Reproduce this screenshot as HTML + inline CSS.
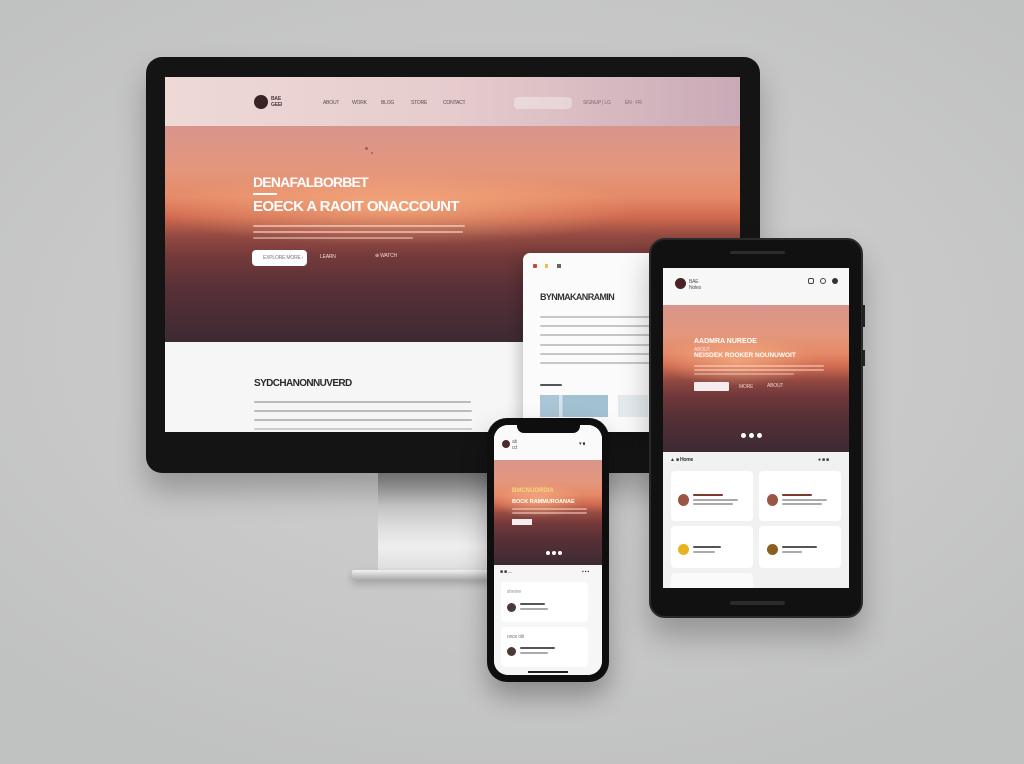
<!DOCTYPE html>
<html><head><meta charset="utf-8"><style>
*{margin:0;padding:0;box-sizing:border-box}
body{width:1024px;height:764px;overflow:hidden;position:relative;font-family:"Liberation Sans",sans-serif;
background:radial-gradient(ellipse 70% 60% at 50% 45%,#d2d2d2 0%,#c8c8c8 60%,#c0c1c1 100%);}
.a{position:absolute}
.t{position:absolute;font-size:5px;line-height:6px;color:#888;white-space:nowrap;overflow:hidden;letter-spacing:-.2px}
.bar{position:absolute;height:2px;border-radius:1px}
.sea{background:
 radial-gradient(ellipse 60% 25% at 40% 38%,rgba(255,190,140,.6),rgba(255,160,120,0) 70%),
 linear-gradient(180deg,#d8958c 0%,#e3977c 20%,#e58a68 33%,#d06a50 42%,#934a42 51%,#72393a 61%,#583037 75%,#3d2a33 100%);}
.shadow{box-shadow:0 18px 30px rgba(0,0,0,.25)}
</style></head><body>

<!-- monitor stand -->
<div class="a" style="left:378px;top:470px;width:112px;height:102px;background:linear-gradient(180deg,#8a8a8a 0%,#c8c8c8 35%,#efefef 75%,#dcdcdc 100%);"></div>
<div class="a" style="left:352px;top:570px;width:140px;height:10px;background:linear-gradient(180deg,#f2f2f2,#a9a9a9);border-radius:2px;box-shadow:0 4px 8px rgba(0,0,0,.2)"></div>

<!-- monitor -->
<div class="a shadow" style="left:146px;top:57px;width:614px;height:416px;background:#141414;border-radius:16px;"></div>
<div class="a" style="left:165px;top:77px;width:575px;height:355px;overflow:hidden;background:#f6f6f6">
  <div class="a" style="left:0;top:0;width:575px;height:49px;background:linear-gradient(90deg,#eed9d7,#e6cccd 50%,#c9aab6)"></div>
  <div class="a" style="left:89px;top:18px;width:14px;height:14px;border-radius:50%;background:#3a2226"></div>
  <div class="t" style="left:106px;top:19px;color:#4a3a3a;font-weight:bold">BAE<br>GEEI</div>
  <div class="t" style="left:158px;top:23px;color:#5a4a4a">ABOUT</div>
  <div class="t" style="left:187px;top:23px;color:#5a4a4a">WORK</div>
  <div class="t" style="left:216px;top:23px;color:#5a4a4a">BLOG</div>
  <div class="t" style="left:246px;top:23px;color:#5a4a4a">STORE</div>
  <div class="t" style="left:278px;top:23px;color:#5a4a4a">CONTACT</div>
  <div class="a" style="left:349px;top:20px;width:58px;height:12px;border-radius:4px;background:rgba(255,255,255,.35)"></div>
  <div class="t" style="left:418px;top:23px;color:#7a6a70">SIGNUP | LG</div>
  <div class="t" style="left:460px;top:23px;color:#7a6a70">EN · FR</div>
  <div class="a sea" style="left:0;top:49px;width:575px;height:216px"></div>
  <div class="a" style="left:200px;top:70px;width:3px;height:3px;border-radius:50%;background:#b05a50"></div>
  <div class="a" style="left:206px;top:75px;width:2px;height:2px;border-radius:50%;background:#b05a50"></div>
  <div class="a" style="left:88px;top:97px;font-size:14px;font-weight:bold;color:#fff;letter-spacing:-.8px;white-space:nowrap">DENAFALBORBET</div>
  <div class="a" style="left:88px;top:116px;width:24px;height:2px;background:#fff"></div>
  <div class="a" style="left:88px;top:121px;font-size:15px;font-weight:bold;color:#fff;letter-spacing:-.6px;white-space:nowrap">EOECK A RAOIT ONACCOUNT</div>
  <div class="bar" style="left:88px;top:148px;width:212px;background:rgba(255,230,220,.55)"></div>
  <div class="bar" style="left:88px;top:154px;width:210px;background:rgba(255,230,220,.55)"></div>
  <div class="bar" style="left:88px;top:160px;width:160px;background:rgba(255,230,220,.45)"></div>
  <div class="a" style="left:87px;top:173px;width:55px;height:16px;border-radius:4px;background:#fff"></div>
  <div class="t" style="left:98px;top:178px;color:#777">EXPLORE MORE ›</div>
  <div class="t" style="left:155px;top:177px;color:#f0d8d0">LEARN</div>
  <div class="t" style="left:210px;top:176px;color:#f0d8d0">⊕ WATCH</div>
  <div class="a" style="left:89px;top:301px;font-size:10px;font-weight:bold;color:#2a2a2a;white-space:nowrap;letter-spacing:-.6px">SYDCHANONNUVERD</div>
  <div class="bar" style="left:89px;top:324px;width:217px;background:#bbb"></div>
  <div class="bar" style="left:89px;top:333px;width:218px;background:#bbb"></div>
  <div class="bar" style="left:89px;top:342px;width:218px;background:#bbb"></div>
  <div class="bar" style="left:89px;top:351px;width:218px;background:#ccc"></div>
</div>

<!-- floating card -->
<div class="a" style="left:523px;top:253px;width:130px;height:179px;background:#fbfbfb;border-radius:7px 0 0 0;box-shadow:-4px 4px 14px rgba(0,0,0,.2)"></div>
<div class="a" style="left:533px;top:264px;width:4px;height:4px;background:#c43;border-radius:1px"></div>
<div class="a" style="left:545px;top:264px;width:3px;height:4px;background:#e9c04a"></div>
<div class="a" style="left:557px;top:264px;width:4px;height:4px;background:#666"></div>
<div class="a" style="left:540px;top:292px;font-size:9px;font-weight:bold;color:#333;white-space:nowrap;letter-spacing:-.6px">BYNMAKANRAMIN</div>
<div class="bar" style="left:540px;top:316px;width:110px;background:#c6c6c6"></div>
<div class="bar" style="left:540px;top:325px;width:110px;background:#c6c6c6"></div>
<div class="bar" style="left:540px;top:334px;width:110px;background:#c6c6c6"></div>
<div class="bar" style="left:540px;top:344px;width:110px;background:#c6c6c6"></div>
<div class="bar" style="left:540px;top:353px;width:110px;background:#c6c6c6"></div>
<div class="bar" style="left:540px;top:362px;width:110px;background:#c6c6c6"></div>
<div class="bar" style="left:540px;top:384px;width:22px;background:#555"></div>
<div class="a" style="left:540px;top:395px;width:68px;height:22px;background:linear-gradient(90deg,#a9c6d6 0 28%,#d5e3ea 28% 33%,#a2c2d2 33%)"></div>
<div class="a" style="left:618px;top:395px;width:30px;height:22px;background:#e4ebef"></div>

<!-- tablet -->
<div class="a shadow" style="left:649px;top:238px;width:214px;height:380px;background:#111;border-radius:16px;border:2px solid #2a2a2a"></div>
<div class="a" style="left:862px;top:305px;width:3px;height:22px;background:#222"></div>
<div class="a" style="left:862px;top:350px;width:3px;height:16px;background:#222"></div>
<div class="a" style="left:730px;top:251px;width:55px;height:3px;border-radius:2px;background:#2c2c2c"></div>
<div class="a" style="left:730px;top:601px;width:55px;height:4px;border-radius:2px;background:#2c2c2c"></div>
<div class="a" style="left:663px;top:268px;width:186px;height:320px;overflow:hidden;background:#f1f1f1">
  <div class="a" style="left:0;top:0;width:186px;height:37px;background:#f7f7f7"></div>
  <div class="a" style="left:12px;top:10px;width:11px;height:11px;border-radius:50%;background:#4a2226"></div>
  <div class="t" style="left:26px;top:11px;color:#555">BAE<br>Notes</div>
  <div class="a" style="left:145px;top:10px;width:6px;height:6px;border:1.5px solid #444;border-radius:2px"></div>
  <div class="a" style="left:157px;top:10px;width:6px;height:6px;border:1.5px solid #444;border-radius:50%"></div>
  <div class="a" style="left:169px;top:10px;width:6px;height:6px;background:#333;border-radius:50%"></div>
  <div class="a sea" style="left:0;top:37px;width:186px;height:147px"></div>
  <div class="a" style="left:31px;top:70px;font-size:7px;font-weight:bold;color:#fff;white-space:nowrap">AADMRA NUREOE</div>
  <div class="t" style="left:31px;top:79px;color:#fde">ABOUT</div>
  <div class="a" style="left:31px;top:84px;font-size:6.5px;font-weight:bold;color:#fff;white-space:nowrap">NEISDEK ROOKER NOUNUWOIT</div>
  <div class="bar" style="left:31px;top:97px;width:130px;height:1.5px;background:rgba(255,220,210,.5)"></div>
  <div class="bar" style="left:31px;top:101px;width:130px;height:1.5px;background:rgba(255,220,210,.5)"></div>
  <div class="bar" style="left:31px;top:105px;width:100px;height:1.5px;background:rgba(255,220,210,.4)"></div>
  <div class="a" style="left:31px;top:114px;width:35px;height:9px;background:#f6eeee;border-radius:1px"></div>
  <div class="t" style="left:76px;top:116px;color:#f0d0c8">MORE</div>
  <div class="t" style="left:104px;top:115px;color:#f0d0c8">ABOUT</div>
  <div class="a" style="left:78px;top:165px;width:5px;height:5px;border-radius:50%;background:#fff"></div>
  <div class="a" style="left:86px;top:165px;width:5px;height:5px;border-radius:50%;background:#fff"></div>
  <div class="a" style="left:94px;top:165px;width:5px;height:5px;border-radius:50%;background:#fff"></div>
  <div class="t" style="left:7px;top:189px;color:#333;font-weight:bold">▲ ■ Home</div>
  <div class="t" style="left:155px;top:189px;color:#333">● ■ ■</div>
  <div class="a" style="left:8px;top:203px;width:82px;height:50px;background:#fff;border-radius:4px"></div>
  <div class="a" style="left:96px;top:203px;width:82px;height:50px;background:#fff;border-radius:4px"></div>
  <div class="a" style="left:15px;top:226px;width:11px;height:12px;border-radius:50%;background:#9a5545"></div>
  <div class="a" style="left:104px;top:226px;width:11px;height:12px;border-radius:50%;background:#9a5545"></div>
  <div class="bar" style="left:30px;top:226px;width:30px;background:#7a3a30"></div>
  <div class="bar" style="left:30px;top:231px;width:45px;height:1.5px;background:#aaa"></div>
  <div class="bar" style="left:30px;top:235px;width:40px;height:1.5px;background:#aaa"></div>
  <div class="bar" style="left:119px;top:226px;width:30px;background:#7a3a30"></div>
  <div class="bar" style="left:119px;top:231px;width:45px;height:1.5px;background:#aaa"></div>
  <div class="bar" style="left:119px;top:235px;width:40px;height:1.5px;background:#aaa"></div>
  <div class="a" style="left:8px;top:258px;width:82px;height:42px;background:#fff;border-radius:4px"></div>
  <div class="a" style="left:96px;top:258px;width:82px;height:42px;background:#fff;border-radius:4px"></div>
  <div class="a" style="left:15px;top:276px;width:11px;height:11px;border-radius:50%;background:#e7b321"></div>
  <div class="a" style="left:104px;top:276px;width:11px;height:11px;border-radius:50%;background:#8a6020"></div>
  <div class="bar" style="left:30px;top:278px;width:28px;background:#555"></div>
  <div class="bar" style="left:30px;top:283px;width:22px;height:1.5px;background:#aaa"></div>
  <div class="bar" style="left:119px;top:278px;width:35px;background:#555"></div>
  <div class="bar" style="left:119px;top:283px;width:20px;height:1.5px;background:#aaa"></div>
  <div class="a" style="left:8px;top:305px;width:82px;height:20px;background:#fafafa;border-radius:4px"></div>
</div>

<!-- phone -->
<div class="a" style="left:487px;top:418px;width:122px;height:264px;background:#0e0e0e;border-radius:20px;box-shadow:0 14px 26px rgba(0,0,0,.3)"></div>
<div class="a" style="left:494px;top:425px;width:108px;height:250px;overflow:hidden;background:#f4f4f4;border-radius:14px">
  <div class="a" style="left:0;top:0;width:108px;height:35px;background:#fafafa"></div>
  <div class="a" style="left:23px;top:-1px;width:63px;height:9px;background:#0e0e0e;border-radius:0 0 7px 7px"></div>
  <div class="a" style="left:8px;top:15px;width:8px;height:8px;border-radius:50%;background:#4a2a2e"></div>
  <div class="t" style="left:18px;top:14px;color:#666">ab<br>cd</div>
  <div class="t" style="left:85px;top:16px;color:#333">▾ ■</div>
  <div class="a sea" style="left:0;top:35px;width:108px;height:105px"></div>
  <div class="a" style="left:18px;top:63px;font-size:6px;font-weight:bold;color:#f6d77a;white-space:nowrap">BMCNUORDIA</div>
  <div class="a" style="left:18px;top:74px;font-size:5.5px;font-weight:bold;color:#fff;white-space:nowrap">BOCK RAMMUROANAE</div>
  <div class="bar" style="left:18px;top:83px;width:75px;height:1.5px;background:rgba(255,220,210,.5)"></div>
  <div class="bar" style="left:18px;top:87px;width:75px;height:1.5px;background:rgba(255,220,210,.5)"></div>
  <div class="a" style="left:18px;top:94px;width:20px;height:6px;background:#f4eeee"></div>
  <div class="a" style="left:52px;top:126px;width:4px;height:4px;border-radius:50%;background:#fff"></div>
  <div class="a" style="left:58px;top:126px;width:4px;height:4px;border-radius:50%;background:#fff"></div>
  <div class="a" style="left:64px;top:126px;width:4px;height:4px;border-radius:50%;background:#fff"></div>
  <div class="a" style="left:0;top:140px;width:108px;height:110px;background:#f6f6f6"></div>
  <div class="t" style="left:6px;top:144px;color:#333">■ ■ ...</div>
  <div class="t" style="left:88px;top:144px;color:#333">▪ ▪ ▪</div>
  <div class="a" style="left:7px;top:157px;width:87px;height:40px;background:#fff;border-radius:4px"></div>
  <div class="a" style="left:7px;top:202px;width:87px;height:40px;background:#fff;border-radius:4px"></div>
  <div class="t" style="left:13px;top:164px;color:#999">sheree</div>
  <div class="a" style="left:13px;top:178px;width:9px;height:9px;border-radius:50%;background:#4a3a35"></div>
  <div class="bar" style="left:26px;top:178px;width:25px;background:#555"></div>
  <div class="bar" style="left:26px;top:183px;width:28px;height:1.5px;background:#aaa"></div>
  <div class="t" style="left:13px;top:209px;color:#777">once old</div>
  <div class="a" style="left:13px;top:222px;width:9px;height:9px;border-radius:50%;background:#4a3a35"></div>
  <div class="bar" style="left:26px;top:222px;width:35px;background:#555"></div>
  <div class="bar" style="left:26px;top:227px;width:28px;height:1.5px;background:#aaa"></div>
  <div class="a" style="left:34px;top:246px;width:40px;height:1.5px;background:#222"></div>
</div>
</body></html>
